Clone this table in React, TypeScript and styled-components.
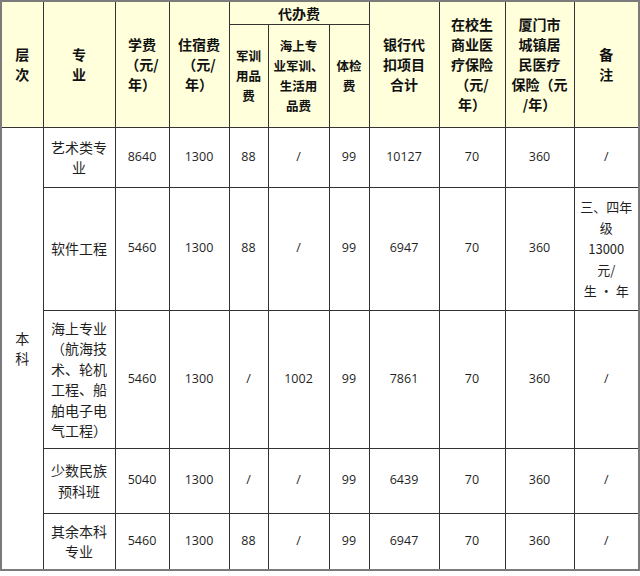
import React from "react";
import styled, { createGlobalStyle } from "styled-components";

const Global = createGlobalStyle`
  html, body { margin: 0; padding: 0; background: #ffffff; }
  body { font-family: "Noto Sans CJK SC", "Noto Sans", sans-serif; }
`;

const Table = styled.table`
  width: 638px;
  table-layout: fixed;
  border-collapse: collapse;
  border: 2px solid #7b7b7b;
  color: #1a1a1a;
`;

const Row = styled.tr<{ $h: number }>`
  height: ${(p) => p.$h}px;
`;

const HeadCell = styled.th<{ $small?: boolean }>`
  padding: 0;
  background: #ffffdb;
  border: 1px solid #333333;
  font-family: "Noto Sans CJK SC", sans-serif;
  font-weight: 700;
  font-size: ${(p) => (p.$small ? 12.5 : 14)}px;
  line-height: 20px;
  text-align: center;
  vertical-align: middle;
  color: #111111;
`;

const Cell = styled.td<{ $num?: boolean; $small?: boolean }>`
  padding: 0;
  border: 1px solid #333333;
  font-family: ${(p) =>
    p.$num ? `"Open Sans", "Noto Sans CJK SC", sans-serif` : `"Noto Sans CJK SC", sans-serif`};
  font-size: ${(p) => (p.$num ? 12.5 : p.$small ? 13 : 14)}px;
  line-height: ${(p) => (p.$small ? 21 : 20.5)}px;
  text-align: center;
  vertical-align: middle;
  color: #1f1f1f;
`;

const Lines: React.FC<{ text: string }> = ({ text }) => (
  <>
    {text.split("|").map((l, i, arr) => (
      <React.Fragment key={i}>
        {l}
        {i < arr.length - 1 && <br />}
      </React.Fragment>
    ))}
  </>
);

const widths = [42, 72, 54, 60, 39, 61, 40, 70, 66, 69, 65];

type BodyRow = { h: number; major: string; vals: string[]; remark: string; remarkSmall?: boolean };

const rows: BodyRow[] = [
  { h: 60, major: "艺术类专|业", vals: ["8640", "1300", "88", "/", "99", "10127", "70", "360"], remark: "/" },
  {
    h: 123,
    major: "软件工程",
    vals: ["5460", "1300", "88", "/", "99", "6947", "70", "360"],
    remark: "三、四年|级|13000|元/|生 · 年",
    remarkSmall: true,
  },
  {
    h: 138,
    major: "海上专业|（航海技|术、轮机|工程、船|舶电子电|气工程）",
    vals: ["5460", "1300", "/", "1002", "99", "7861", "70", "360"],
    remark: "/",
  },
  { h: 65, major: "少数民族|预科班", vals: ["5040", "1300", "/", "/", "99", "6439", "70", "360"], remark: "/" },
  { h: 57, major: "其余本科|专业", vals: ["5460", "1300", "88", "/", "99", "6947", "70", "360"], remark: "/" },
];

export default function App() {
  return (
    <>
      <Global />
      <Table>
        <colgroup>
          {widths.map((w, i) => (
            <col key={i} style={{ width: w }} />
          ))}
        </colgroup>
        <thead>
          <Row $h={23}>
            <HeadCell rowSpan={2}><Lines text="层|次" /></HeadCell>
            <HeadCell rowSpan={2}><Lines text="专|业" /></HeadCell>
            <HeadCell rowSpan={2}><Lines text="学费|（元/|年）" /></HeadCell>
            <HeadCell rowSpan={2}><Lines text="住宿费|（元/|年）" /></HeadCell>
            <HeadCell colSpan={3}>代办费</HeadCell>
            <HeadCell rowSpan={2}><Lines text="银行代|扣项目|合计" /></HeadCell>
            <HeadCell rowSpan={2}><Lines text="在校生|商业医|疗保险|（元/|年）" /></HeadCell>
            <HeadCell rowSpan={2}><Lines text="厦门市|城镇居|民医疗|保险（元|/年）" /></HeadCell>
            <HeadCell rowSpan={2}><Lines text="备|注" /></HeadCell>
          </Row>
          <Row $h={103}>
            <HeadCell $small><Lines text="军训|用品|费" /></HeadCell>
            <HeadCell $small><Lines text="海上专|业军训、|生活用|品费" /></HeadCell>
            <HeadCell $small><Lines text="体检|费" /></HeadCell>
          </Row>
        </thead>
        <tbody>
          {rows.map((r, i) => (
            <Row key={i} $h={r.h}>
              {i === 0 && (
                <Cell rowSpan={rows.length}>
                  <Lines text="本|科" />
                </Cell>
              )}
              <Cell>
                <Lines text={r.major} />
              </Cell>
              {r.vals.map((v, j) => (
                <Cell key={j} $num>
                  {v}
                </Cell>
              ))}
              <Cell $num={!r.remarkSmall} $small={r.remarkSmall}>
                <Lines text={r.remark} />
              </Cell>
            </Row>
          ))}
        </tbody>
      </Table>
    </>
  );
}
